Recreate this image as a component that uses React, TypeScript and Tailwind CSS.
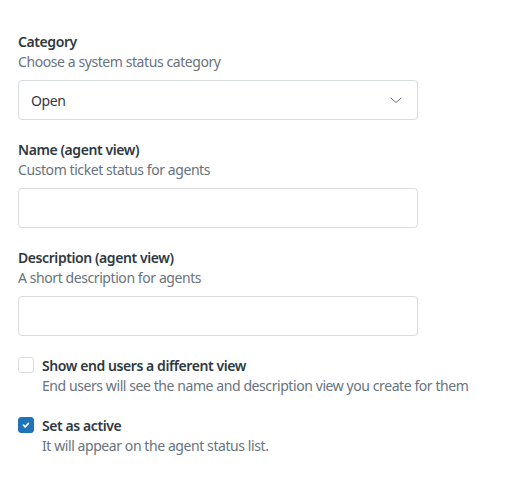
import React from "react";

function Field({ label, hint, children }: { label: string; hint: string; children: React.ReactNode }) {
  return (
    <div className="flex flex-col">
      <div className="text-[14px] leading-[20px] font-semibold text-[#2f3941]">{label}</div>
      <div className="text-[14px] leading-[20px] text-[#68737d]">{hint}</div>
      <div className="mt-2">{children}</div>
    </div>
  );
}

function Check({ checked, label, hint }: { checked: boolean; label: string; hint: string }) {
  return (
    <div className="flex gap-2">
      <div className="pt-[1px]">
        {checked ? (
          <div className="w-4 h-4 rounded-[3px] bg-[#1f73b7] border border-[#1f73b7] flex items-center justify-center">
            <svg width="10" height="10" viewBox="0 0 12 12" fill="none">
              <path d="M3 6.2 L5 8.2 L9 4" stroke="white" strokeWidth="2" strokeLinecap="round" strokeLinejoin="round" />
            </svg>
          </div>
        ) : (
          <div className="w-4 h-4 rounded-[3px] bg-white border border-[#d8dcde]" />
        )}
      </div>
      <div className="flex flex-col">
        <div className="text-[14px] leading-[20px] font-semibold text-[#2f3941]">{label}</div>
        <div className="text-[14px] leading-[20px] text-[#68737d]">{hint}</div>
      </div>
    </div>
  );
}

export default function App() {
  return (
    <div
      className="w-[512px] h-[497px] bg-white px-[18px] pt-[32px] tracking-[-0.42px]"
      style={{ fontFamily: '"Segoe UI", "Noto Sans", "Open Sans", sans-serif' }}
    >
      <div className="w-[400px] flex flex-col gap-5">
        <Field label="Category" hint="Choose a system status category">
          <div className="h-10 w-full rounded border border-[#d8dcde] flex items-center justify-between pl-3 pr-[15px]">
            <span className="text-[14px] text-[#2f3941]">Open</span>
            <svg width="12" height="7" viewBox="0 0 12 7" fill="none">
              <path d="M1 1.2 L6 5.5 L11 1.2" stroke="#68737d" strokeWidth="1" strokeLinecap="round" strokeLinejoin="round" />
            </svg>
          </div>
        </Field>
        <Field label="Name (agent view)" hint="Custom ticket status for agents">
          <div className="h-10 w-full rounded border border-[#d8dcde]" />
        </Field>
        <Field label="Description (agent view)" hint="A short description for agents">
          <div className="h-10 w-full rounded border border-[#d8dcde]" />
        </Field>
        <div className="w-[500px] flex flex-col gap-5">
          <Check
            checked={false}
            label="Show end users a different view"
            hint="End users will see the name and description view you create for them"
          />
          <Check checked={true} label="Set as active" hint="It will appear on the agent status list." />
        </div>
      </div>
    </div>
  );
}
